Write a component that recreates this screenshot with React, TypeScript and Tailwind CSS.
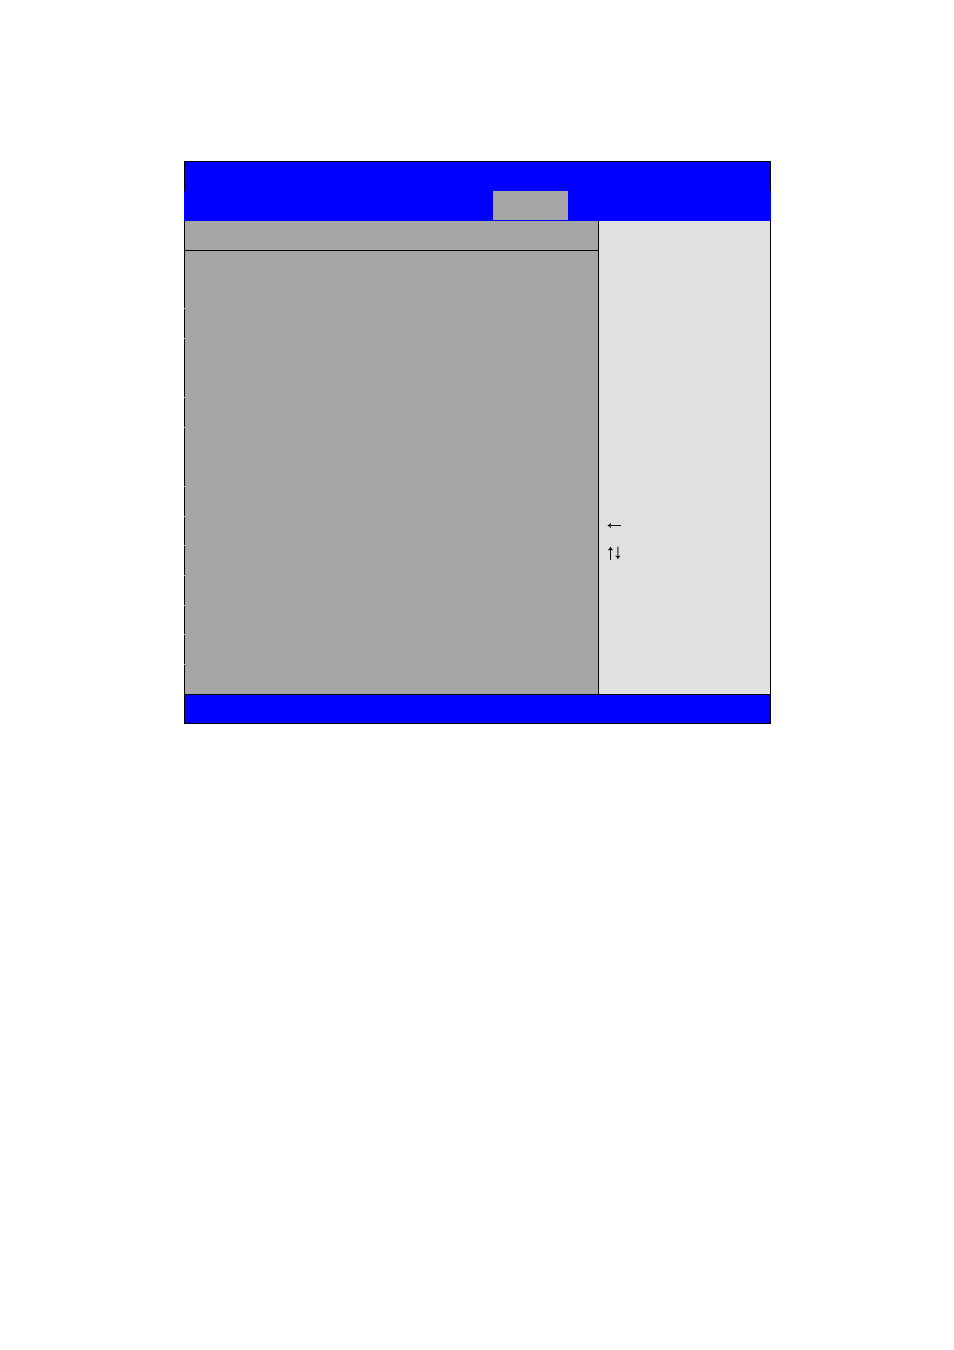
const rowHeights: string[] = [
  'h-[57px]',
  'h-[29px]',
  'h-[58px]',
  'h-[29px]',
  'h-[58px]',
  'h-[29px]',
  'h-[28px]',
  'h-[29px]',
  'h-[29px]',
  'h-[28px]',
  'h-[29px]',
  'h-[29px]',
];

function Header() {
  return (
    <header className="bg-[#0000ff]">
      <div className="h-[30px] border-x border-t border-black" />
      <nav className="flex h-[30px] pb-px">
        <div className="grow-[309]" />
        <button type="button" aria-label="Current menu" className="w-[75px] bg-[#a6a6a6]" />
        <div className="grow-[203]" />
      </nav>
    </header>
  );
}

function Settings() {
  return (
    <section className="flex flex-1 flex-col bg-[#a6a6a6]">
      <div className="h-[30px] border-b border-l border-black" />
      <div className="flex flex-col gap-px">
        {rowHeights.map((height, index) => (
          <div key={index} className={`border-l border-black ${height}`} />
        ))}
      </div>
    </section>
  );
}

function LeftArrow() {
  return (
    <svg viewBox="0 0 14 14" className="size-3.5" role="img" aria-label="←">
      <path d="M2 7.5H14" stroke="#111" strokeWidth="1" />
      <path d="M0.3 7.5Q2.6 6.7 3.6 5L4.2 5.4Q3.4 6.6 3.4 7.5Q3.4 8.4 4.2 9.6L3.6 10Q2.6 8.3 0.3 7.5Z" fill="#000" />
    </svg>
  );
}

function UpDownArrows() {
  return (
    <svg viewBox="0 0 14 14" className="size-3.5" role="img" aria-label="↑↓">
      <path d="M3.5 2V14" stroke="#111" strokeWidth="1" />
      <path d="M3.5 0.6Q4.3 2.9 6 3.9L5.6 4.5Q4.4 3.7 3.5 3.7Q2.6 3.7 1.4 4.5L1 3.9Q2.7 2.9 3.5 0.6Z" fill="#000" />
      <path d="M10.9 0.6V12" stroke="#111" strokeWidth="1" />
      <path d="M10.9 13.4Q11.7 11.1 13.4 10.1L13 9.5Q11.8 10.3 10.9 10.3Q10 10.3 8.8 9.5L8.4 10.1Q10.1 11.1 10.9 13.4Z" fill="#000" />
    </svg>
  );
}

function KeyHelp() {
  return (
    <aside className="flex w-[173px] flex-col justify-end gap-3.5 border-x border-black bg-[#e0e0e0] pb-[134px] pl-2">
      <LeftArrow />
      <UpDownArrows />
    </aside>
  );
}

export default function App() {
  return (
    <div className="min-h-screen bg-white pt-[161px] pr-[183px] pl-[184px] font-['Liberation_Serif',serif]">
      <Header />
      <main className="flex">
        <Settings />
        <KeyHelp />
      </main>
      <footer className="h-[30px] border border-black bg-[#0000ff]" />
    </div>
  );
}
